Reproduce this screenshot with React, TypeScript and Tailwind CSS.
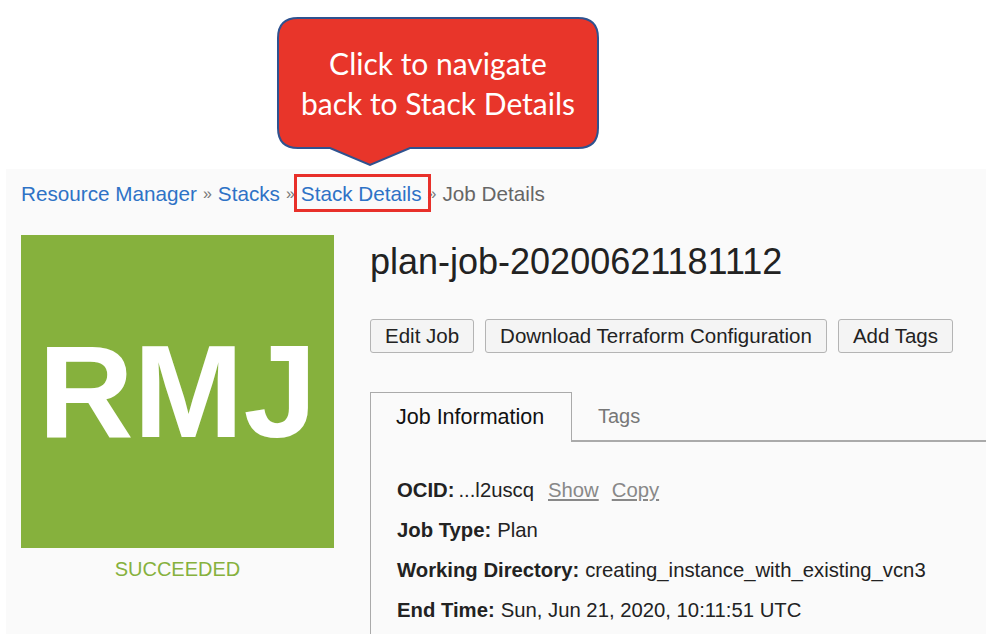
import React from 'react';

const SANS = { fontFamily: '"Liberation Sans", Arial, sans-serif' };

function Callout() {
  return (
    <div className="absolute left-[277px] top-[17px] h-[150px] w-[322px]">
      <svg width="322" height="150" viewBox="0 0 322 150" className="absolute left-0 top-0">
        <path
          d="M21 1 H301 Q321 1 321 21 V111 Q321 131 301 131 H133 L93 148 L53 131 H21 Q1 131 1 111 V21 Q1 1 21 1 Z"
          fill="#e8352a"
          stroke="#2f528f"
          strokeWidth="2"
        />
      </svg>
      <div
        className="relative pt-[26px] text-center text-[30px] leading-[40px] text-white"
        style={{ fontFamily: 'Lato, "Open Sans", sans-serif' }}
      >
        <div>Click to navigate</div>
        <div>back to Stack Details</div>
      </div>
    </div>
  );
}

function Sep() {
  return <span className="mx-[6px] text-[16px] text-[#777]">»</span>;
}

function Row({ label, children }: { label: string; children: React.ReactNode }) {
  return (
    <div className="flex items-baseline leading-[24px] text-[#222]">
      <span className="font-bold">{label}</span>
      <span className="ml-[6px]">{children}</span>
    </div>
  );
}

export default function App() {
  return (
    <div className="relative min-h-[634px] bg-white" style={SANS}>
      <Callout />
      <div className="h-[169px]" />
      <div className="ml-[6px] min-h-[465px] bg-[#fafafa] pl-[15px] pt-[13px]">
        {/* breadcrumb */}
        <div className="flex items-center text-[20.7px] leading-[24px]">
          <span className="text-[#2e72c6]">Resource Manager</span>
          <Sep />
          <span className="text-[#2e72c6]">Stacks</span>
          <Sep />
          <span className="relative text-[#2e72c6]">
            Stack Details
            <span className="absolute -left-[7px] -right-[9px] -top-[8px] -bottom-[6px] border-[3px] border-[#e8302a]" />
          </span>
          <Sep />
          <span className="text-[#666]">Job Details</span>
        </div>

        <div className="mt-[29px] flex gap-[36px]">
          {/* left column */}
          <div className="w-[313px] shrink-0">
            <div className="flex h-[313px] w-[313px] items-center justify-center bg-[#86b13d]">
              <span className="text-[132px] font-bold leading-none text-white">RMJ</span>
            </div>
            <div className="mt-[9px] text-center text-[20px] leading-[24px] text-[#86b13d]">SUCCEEDED</div>
          </div>

          {/* right column */}
          <div className="flex-1">
            <h1 className="pt-[7px] text-[36px] leading-[40px] text-[#222]">plan-job-20200621181112</h1>

            <div className="mt-[37px] flex gap-[11px]">
              {['Edit Job', 'Download Terraform Configuration', 'Add Tags'].map((b) => (
                <button
                  key={b}
                  className="h-[34px] rounded-[3px] border border-[#b4b4b4] bg-[#f4f4f4] px-[14px] text-[20.5px] text-[#222]"
                >
                  {b}
                </button>
              ))}
            </div>

            {/* tabs */}
            <div className="mt-[39px] flex border-b-2 border-[#aaa]">
              <div className="-mb-[2px] flex h-[50px] w-[202px] items-center border border-b-0 border-[#aaa] bg-[#fafafa] pl-[25px] text-[21.5px] text-[#111]">
                Job Information
              </div>
              <div className="flex h-[48px] items-center pl-[26px] text-[20px] text-[#777]">Tags</div>
            </div>

            <div className="flex flex-col gap-[16px] border-l border-[#aaa] pb-[20px] pl-[26px] pt-[36px] text-[20.3px]">
              <Row label="OCID:">
                <span className="ml-[-2px]">...l2uscq</span>
                <span className="ml-[14px] text-[#888] underline">Show</span>
                <span className="ml-[13px] text-[#888] underline">Copy</span>
              </Row>
              <Row label="Job Type:">Plan</Row>
              <Row label="Working Directory:">creating_instance_with_existing_vcn3</Row>
              <Row label="End Time:">Sun, Jun 21, 2020, 10:11:51 UTC</Row>
            </div>
          </div>
        </div>
      </div>
    </div>
  );
}
